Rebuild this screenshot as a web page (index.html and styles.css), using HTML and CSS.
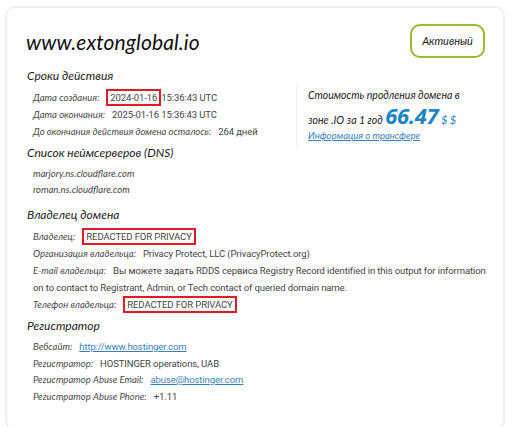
FILE: index.html
```html
<!DOCTYPE html>
<html lang="ru">
<head>
    <meta charset="UTF-8">
    <title>www.extonglobal.io - WHOIS</title>
    <link rel="stylesheet" href="styles.css">
</head>
<body>
    <div class="whois-card">
        <div class="card-header">
            <h1 class="domain-name">www.extonglobal.io</h1>
            <span class="status-badge">Активный</span>
        </div>

        <!-- Сроки действия + цена -->
        <h2 class="section-title">Сроки действия</h2>
        <div class="dates-row">
            <div class="info-list">
                <div class="info-row"><span class="label">Дата создания:</span><span class="value"><span class="highlight">2024-01-16</span>15:36:43 UTC</span></div>
                <div class="info-row"><span class="label">Дата окончания:</span><span class="value">2025-01-16 15:36:43 UTC</span></div>
                <div class="info-row"><span class="label">До окончания действия домена осталось:</span><span class="value">264 дней</span></div>
            </div>
            <div class="price-box">
                <p class="price-text">Стоимость продления домена в</p>
                <p class="price-text price-line">зоне .IO за 1 год <span class="price">66.47</span> <span class="currency">$ $</span></p>
                <a href="#" class="transfer-link">Информация о трансфере</a>
            </div>
        </div>

        <h2 class="section-title">Список неймсерверов (DNS)</h2>
        <div class="info-list ns-list">
            <div class="info-row ns">marjory.ns.cloudflare.com</div>
            <div class="info-row ns">roman.ns.cloudflare.com</div>
        </div>

        <h2 class="section-title">Владелец домена</h2>
        <div class="info-list owner-list">
            <div class="info-row"><span class="label">Владелец:</span><span class="value"><span class="highlight">REDACTED FOR PRIVACY</span></span></div>
            <div class="info-row"><span class="label">Организация владельца:</span><span class="value">Privacy Protect, LLC (PrivacyProtect.org)</span></div>
            <div class="info-row"><span class="label">E-mail владельца:</span><span class="value">Вы можете задать RDDS сервиса Registry Record identified in this output for information on to contact to Registrant, Admin, or Tech contact of queried domain name.</span></div>
            <div class="info-row"><span class="label">Телефон владельца:</span><span class="value"><span class="highlight">REDACTED FOR PRIVACY</span></span></div>
        </div>

        <h2 class="section-title">Регистратор</h2>
        <div class="info-list registrar-list">
            <div class="info-row"><span class="label">Вебсайт:</span><a href="#" class="value link">http://www.hostinger.com</a></div>
            <div class="info-row"><span class="label">Регистратор:</span><span class="value">HOSTINGER operations, UAB</span></div>
            <div class="info-row"><span class="label">Регистратор Abuse Email:</span><a href="#" class="value link">abuse@hostinger.com</a></div>
            <div class="info-row"><span class="label">Регистратор Abuse Phone:</span><span class="value">+1.11</span></div>
        </div>
    </div>
</body>
</html>
```

FILE: styles.css
```css
body {
    margin: 0;
    padding: 6px 8px 6px 5px;
    background: #ffffff;
    font-family: 'Roboto', 'Noto Sans', sans-serif;
    color: #333;
}

.whois-card {
    width: 462px;
    border: 2px solid #f0f0f0;
    border-radius: 10px;
    padding: 16px 16px 18px 18px;
    background: white;
}

.card-header {
    display: flex;
    justify-content: space-between;
    align-items: center;
    margin-bottom: 9px;
}

.domain-name {
    margin: 0 0 0 1px;
    font-family: 'Lato', sans-serif;
    font-style: italic;
    font-weight: 400;
    font-size: 21px;
    color: #111;
    letter-spacing: 0.1px;
}

.status-badge {
    display: inline-block;
    width: 71px;
    height: 30px;
    line-height: 30px;
    text-align: center;
    border: 2px solid #9bbb2c;
    border-radius: 10px;
    font-family: 'Lato', sans-serif;
    font-style: italic;
    font-size: 11px;
    color: #222;
    margin-right: 2px;
}

.section-title {
    margin: 0 0 4px 2px;
    font-family: 'Lato', sans-serif;
    font-style: italic;
    font-weight: 400;
    font-size: 12px;
    line-height: 18px;
    color: #1a1a1a;
}

.dates-row {
    display: flex;
    justify-content: space-between;
    margin-bottom: -2px;
}

.info-list {
    padding-left: 8px;
    margin-bottom: 6px;
}

.info-row {
    font-size: 9.5px;
    line-height: 17px;
    color: #444;
}

.info-row.ns {
    font-family: 'Lato', sans-serif;
    font-style: italic;
    line-height: 16px;
}

.ns-list {
    margin-bottom: 8px;
}

.owner-list {
    margin-bottom: 4px;
}

.registrar-list .info-row {
    line-height: 16.5px;
}

.label {
    font-family: 'Lato', sans-serif;
    font-style: italic;
    color: #4a4a4a;
    margin-right: 7px;
}

.value {
    font-family: 'Roboto', sans-serif;
    color: #444;
    letter-spacing: -0.1px;
}

.highlight {
    display: inline-block;
    border: 2px solid #dd1c24;
    padding: 0 2px;
    line-height: 13px;
    vertical-align: middle;
    margin-top: -2px;
}

.link {
    color: #3a7fc1;
    text-decoration: underline;
}

.price-box {
    width: 171px;
    border-left: 1px solid #eeeeee;
    padding-left: 11px;
    margin-top: -3px;
    margin-right: 8px;
}

.price-text {
    margin: 0;
    font-family: 'Lato', sans-serif;
    font-style: italic;
    font-size: 10.5px;
    line-height: 18px;
    color: #1a1a1a;
}

.price-line {
    line-height: 22px;
}

.price {
    font-family: 'Open Sans', sans-serif;
    font-style: italic;
    font-weight: 700;
    font-size: 22px;
    line-height: 22px;
    color: #1a86c8;
    letter-spacing: -0.3px;
}

.currency {
    font-style: italic;
    font-size: 11px;
    color: #1a86c8;
}

.transfer-link {
    display: block;
    margin-top: -1px;
    font-family: 'Lato', sans-serif;
    font-style: italic;
    font-size: 9.5px;
    line-height: 12px;
    color: #3a7fc1;
}
```
